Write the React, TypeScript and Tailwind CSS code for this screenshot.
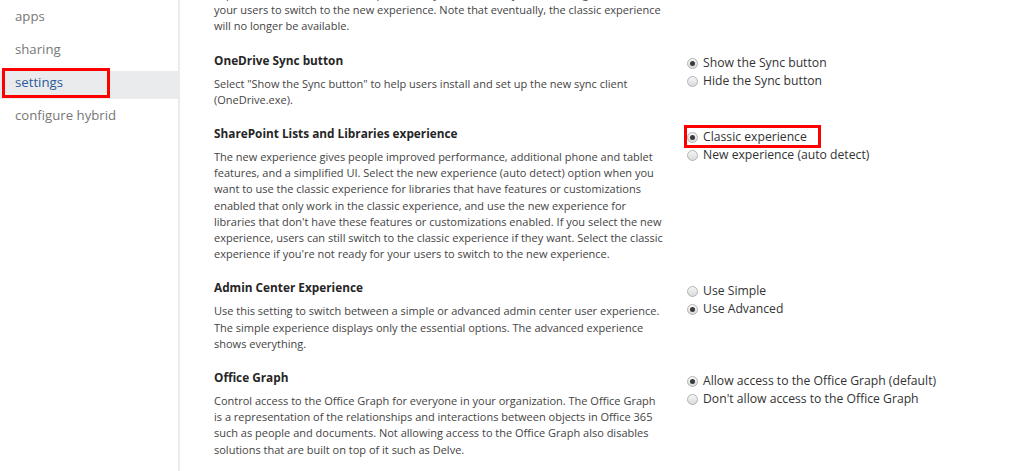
import React from "react";

const font = { fontFamily: '"Open Sans", "Noto Sans", "Liberation Sans", sans-serif' };

function Radio({ checked, label }: { checked?: boolean; label: string }) {
  return (
    <div className="flex items-center h-[18px]">
      <span className="w-[11px] h-[11px] rounded-full border border-[#b4b4b4] bg-gradient-to-b from-[#f6f6f6] to-[#dadada] flex items-center justify-center shrink-0 mr-[5px]">
        {checked && <span className="w-[5px] h-[5px] rounded-full bg-[#3a3a3a]" />}
      </span>
      <span className="text-[12.2px] text-[#333] whitespace-nowrap">{label}</span>
    </div>
  );
}

function Lines({ lines }: { lines: string[] }) {
  return (
    <div className="text-[11px] text-[#444] leading-[16.2px] whitespace-nowrap">
      {lines.map((l, i) => (
        <div key={i}>{l}</div>
      ))}
    </div>
  );
}

function Section({
  title,
  lines,
  options,
  highlight,
}: {
  title: string;
  lines: string[];
  options: { label: string; checked?: boolean }[];
  highlight?: number;
}) {
  return (
    <div className="flex pb-[16px]">
      <div className="w-[460px] shrink-0">
        <div className="text-[11.8px] font-bold text-[#262626] leading-[18px] mb-[7px] whitespace-nowrap">{title}</div>
        <Lines lines={lines} />
      </div>
      <div className="ml-[13px] pt-[4px]">
        {options.map((o, i) =>
          highlight === i ? (
            <div key={i} className="relative">
              <div className="absolute left-[-3px] top-[-3px] w-[137px] h-[23px] border-[3px] border-[#ff0000]" />
              <Radio label={o.label} checked={o.checked} />
            </div>
          ) : (
            <Radio key={i} label={o.label} checked={o.checked} />
          )
        )}
      </div>
    </div>
  );
}

export default function App() {
  return (
    <div className="w-[1024px] h-[471px] overflow-hidden bg-white flex" style={font}>
      <div className="w-[180px] shrink-0 border-r-[2px] border-[#ebebeb]">
        {["apps", "sharing", "settings", "configure hybrid"].map((item) =>
          item === "settings" ? (
            <div key={item} className="relative h-[33px] flex items-center">
              <div className="absolute left-0 right-0 top-[5px] bottom-[0px] bg-[#eaebec]" />
              <div className="absolute left-[2px] top-[2px] w-[108px] h-[30px] border-[3.5px] border-[#ff0000]" />
              <span className="relative pl-[15px] text-[13.2px] text-[#2b5c9c]">{item}</span>
            </div>
          ) : (
            <div key={item} className="h-[33px] flex items-center pl-[15px] text-[13.2px] text-[#777]">
              {item}
            </div>
          )
        )}
      </div>
      <div className="pl-[34px] mt-[-14px]">
        <div className="pb-[16px]">
          <Lines
            lines={[
              "experience. Select the classic experience if you're not ready for the changes, and to allow",
              "your users to switch to the new experience. Note that eventually, the classic experience",
              "will no longer be available.",
            ]}
          />
        </div>
        <Section
          title="OneDrive Sync button"
          lines={[
            'Select "Show the Sync button" to help users install and set up the new sync client',
            "(OneDrive.exe).",
          ]}
          options={[{ label: "Show the Sync button", checked: true }, { label: "Hide the Sync button" }]}
        />
        <Section
          title="SharePoint Lists and Libraries experience"
          lines={[
            "The new experience gives people improved performance, additional phone and tablet",
            "features, and a simplified UI. Select the new experience (auto detect) option when you",
            "want to use the classic experience for libraries that have features or customizations",
            "enabled that only work in the classic experience, and use the new experience for",
            "libraries that don't have these features or customizations enabled. If you select the new",
            "experience, users can still switch to the classic experience if they want. Select the classic",
            "experience if you're not ready for your users to switch to the new experience.",
          ]}
          options={[{ label: "Classic experience", checked: true }, { label: "New experience (auto detect)" }]}
          highlight={0}
        />
        <Section
          title="Admin Center Experience"
          lines={[
            "Use this setting to switch between a simple or advanced admin center user experience.",
            "The simple experience displays only the essential options. The advanced experience",
            "shows everything.",
          ]}
          options={[{ label: "Use Simple" }, { label: "Use Advanced", checked: true }]}
        />
        <Section
          title="Office Graph"
          lines={[
            "Control access to the Office Graph for everyone in your organization. The Office Graph",
            "is a representation of the relationships and interactions between objects in Office 365",
            "such as people and documents. Not allowing access to the Office Graph also disables",
            "solutions that are built on top of it such as Delve.",
          ]}
          options={[
            { label: "Allow access to the Office Graph (default)", checked: true },
            { label: "Don't allow access to the Office Graph" },
          ]}
        />
      </div>
    </div>
  );
}
